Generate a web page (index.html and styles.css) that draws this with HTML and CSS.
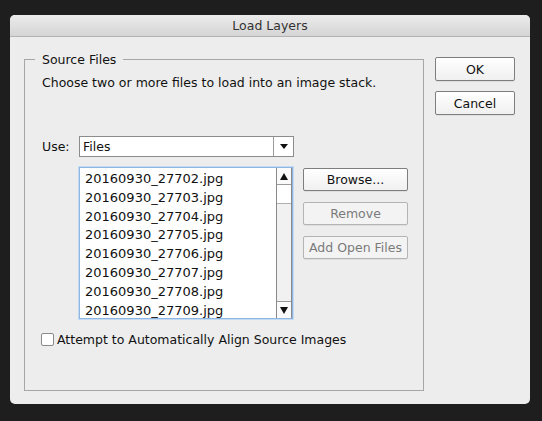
FILE: index.html
```html
<!doctype html>
<html lang="en">

<head>
    <meta charset="UTF-8">
    <meta name="viewport" content="width=device-width, initial-scale=1.0">
    <title>Load Layers</title>
    <link rel="stylesheet" href="styles.css">
</head>

<body>
    <div class="dialog">
        <div class="titlebar">Load Layers</div>

        <div class="dialog-body">
            <fieldset class="source-files">
                <legend>Source Files</legend>
                <p class="hint">Choose two or more files to load into an image stack.</p>

                <div class="use-row">
                    <label for="use">Use:</label>
                    <div class="select" id="use">
                        <span class="select-value">Files</span>
                        <span class="select-arrow">
                            <svg width="8" height="5" viewBox="0 0 8 5"><polygon points="0,0 8,0 4,5" fill="#111"/></svg>
                        </span>
                    </div>
                </div>

                <div class="files-row">
                    <div class="file-list">
                        <ul class="files">
                            <li>20160930_27702.jpg</li>
                            <li>20160930_27703.jpg</li>
                            <li>20160930_27704.jpg</li>
                            <li>20160930_27705.jpg</li>
                            <li>20160930_27706.jpg</li>
                            <li>20160930_27707.jpg</li>
                            <li>20160930_27708.jpg</li>
                            <li>20160930_27709.jpg</li>
                        </ul>
                        <div class="scrollbar">
                            <div class="scroll-btn">
                                <svg width="8" height="7" viewBox="0 0 8 7"><polygon points="4,0 8,7 0,7" fill="#111"/></svg>
                            </div>
                            <div class="scroll-thumb"></div>
                            <div class="scroll-track"></div>
                            <div class="scroll-btn">
                                <svg width="8" height="7" viewBox="0 0 8 7"><polygon points="0,0 8,0 4,7" fill="#111"/></svg>
                            </div>
                        </div>
                    </div>

                    <div class="file-actions">
                        <button class="btn">Browse...</button>
                        <button class="btn" disabled>Remove</button>
                        <button class="btn" disabled>Add Open Files</button>
                    </div>
                </div>

                <label class="check">
                    <input type="checkbox">
                    <span class="box"></span>
                    Attempt to Automatically Align Source Images
                </label>
            </fieldset>

            <div class="actions">
                <button class="btn">OK</button>
                <button class="btn">Cancel</button>
            </div>
        </div>
    </div>
</body>

</html>
```

FILE: styles.css
```css
body {
    margin: 0;
    padding: 15px 0 0 10px;
    background-color: #1e1e1e;
    font-family: 'DejaVu Sans', sans-serif;
    font-size: 12.5px;
    color: #111;
}

.dialog {
    width: 520px;
    height: 389px;
    background-color: #ededed;
    border-radius: 5px;
    overflow: hidden;
    display: flex;
    flex-direction: column;
}

.titlebar {
    height: 21px;
    line-height: 21px;
    text-align: center;
    font-size: 12.5px;
    color: #333;
    background: linear-gradient(#ebebeb, #d5d5d5);
    border-bottom: 1px solid #b3b3b3;
}

.dialog-body {
    display: flex;
    gap: 11px;
    padding: 15px 15px 0 14px;
}

/* group box */
.source-files {
    box-sizing: border-box;
    width: 400px;
    height: 339px;
    min-width: 0;
    margin: 0;
    padding: 0 0 0 17px;
    border: 1px solid #a6a6a6;
}

.source-files legend {
    padding: 0 7px;
    margin-left: -7px;
    line-height: 15px;
}

.hint {
    margin: 8px 0 0;
    line-height: 15px;
}

.use-row {
    display: flex;
    align-items: center;
    margin-top: 46px;
}

.use-row label {
    width: 37px;
}

.select {
    box-sizing: border-box;
    width: 215px;
    height: 21px;
    display: flex;
    background-color: #fff;
    border: 1px solid #8c8c8c;
}

.select-value {
    flex: 1;
    padding-left: 3px;
    line-height: 19px;
}

.select-arrow {
    width: 19px;
    display: flex;
    align-items: center;
    justify-content: center;
    border-left: 1px solid #9a9a9a;
}

/* file list */
.files-row {
    display: flex;
    gap: 10px;
    margin: 10px 0 0 37px;
}

.file-list {
    box-sizing: border-box;
    width: 214px;
    height: 152px;
    display: flex;
    background-color: #fff;
    border: 1px solid #8fb6e3;
    box-shadow: 0 0 0 1px #c4daf2;
}

.files {
    flex: 1;
    margin: 0;
    padding: 2px 0 0 5px;
    list-style: none;
    overflow: hidden;
    font-size: 13px;
    line-height: 18.8px;
}

.scrollbar {
    width: 14px;
    display: flex;
    flex-direction: column;
    background-color: #f1f1f1;
    border-left: 1px solid #8a8a8a;
    border-right: 1px solid #8a8a8a;
}

.scroll-btn {
    height: 16px;
    display: flex;
    align-items: center;
    justify-content: center;
    background-color: #fafafa;
}

.scroll-btn:first-child {
    border-bottom: 1px solid #9a9a9a;
}

.scroll-btn:last-child {
    border-top: 1px solid #9a9a9a;
}

.scroll-thumb {
    height: 18px;
    background-color: #fff;
    border-bottom: 1px solid #b0b0b0;
}

.scroll-track {
    flex: 1;
}

/* buttons */
.btn {
    box-sizing: border-box;
    height: 23px;
    padding: 0;
    font-family: inherit;
    font-size: 12.5px;
    color: #111;
    background: linear-gradient(#ffffff, #f0f0f0);
    border: 1px solid #7e7e7e;
    border-radius: 2px;
    box-shadow: 0 1px 0 rgba(0, 0, 0, 0.06);
}

.btn:disabled {
    color: #7a7a7a;
    border-color: #b4b4b4;
    background: #f3f3f3;
}

.file-actions {
    display: flex;
    flex-direction: column;
    gap: 11px;
    width: 105px;
    padding-top: 1px;
}

.actions {
    display: flex;
    flex-direction: column;
    gap: 10px;
    width: 80px;
    padding-top: 5px;
}

.actions .btn {
    height: 24px;
}

/* checkbox */
.check {
    display: flex;
    align-items: center;
    gap: 3px;
    margin: 13px 0 0 -1px;
}

.check input {
    display: none;
}

.check .box {
    box-sizing: border-box;
    width: 13px;
    height: 13px;
    background-color: #fff;
    border: 1px solid #8a8a8a;
    border-radius: 2px;
}
```
